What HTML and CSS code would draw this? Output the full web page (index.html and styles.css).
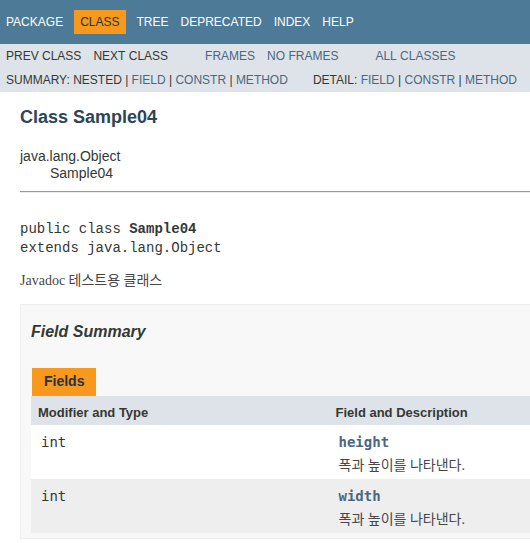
FILE: index.html
```html
<!DOCTYPE html>
<html lang="ko">
<head>
<meta charset="utf-8">
<title>Sample04</title>
<link rel="stylesheet" href="styles.css">
</head>
<body>
<div class="page">
  <div class="topNav">
    <ul class="navList">
      <li><a href="#">Package</a></li>
      <li class="navBarCell1Rev">Class</li>
      <li><a href="#">Tree</a></li>
      <li><a href="#">Deprecated</a></li>
      <li><a href="#">Index</a></li>
      <li><a href="#">Help</a></li>
    </ul>
  </div>
  <div class="subNav">
    <div class="subRow">
      <ul class="navList">
        <li>Prev&nbsp;Class</li>
        <li>Next&nbsp;Class</li>
      </ul>
      <ul class="navList">
        <li><a href="#">Frames</a></li>
        <li><a href="#">No&nbsp;Frames</a></li>
      </ul>
      <ul class="navList">
        <li><a href="#">All&nbsp;Classes</a></li>
      </ul>
    </div>
    <div class="subRow2">
      <ul class="subNavList">
        <li>Summary:&nbsp;</li>
        <li>Nested&nbsp;|&nbsp;</li>
        <li><a href="#">Field</a>&nbsp;|&nbsp;</li>
        <li><a href="#">Constr</a>&nbsp;|&nbsp;</li>
        <li><a href="#">Method</a></li>
      </ul>
      <ul class="subNavList">
        <li>Detail:&nbsp;</li>
        <li><a href="#">Field</a>&nbsp;|&nbsp;</li>
        <li><a href="#">Constr</a>&nbsp;|&nbsp;</li>
        <li><a href="#">Method</a></li>
      </ul>
    </div>
  </div>

  <div class="header">
    <h2 class="title">Class Sample04</h2>
  </div>

  <div class="contentContainer">
    <ul class="inheritance">
      <li>java.lang.Object</li>
      <li>
        <ul class="inheritance inner">
          <li>Sample04</li>
        </ul>
      </li>
    </ul>
    <div class="description">
      <hr class="rule">
      <pre class="signature">public class <span class="typeNameLabel">Sample04</span>
extends java.lang.Object</pre>
      <div class="block">Javadoc 테스트용 클래스</div>
    </div>

    <div class="summary">
      <h3 class="summaryTitle">Field Summary</h3>
      <table class="memberSummary">
        <caption><span class="tab">Fields</span></caption>
        <colgroup>
          <col class="colFirstCol">
          <col>
        </colgroup>
        <tr>
          <th class="colFirst">Modifier and Type</th>
          <th class="colLast">Field and Description</th>
        </tr>
        <tr class="altColor">
          <td class="colFirst"><code>int</code></td>
          <td class="colLast"><code><a class="memberNameLink" href="#">height</a></code>
            <div class="block">폭과 높이를 나타낸다.</div>
          </td>
        </tr>
        <tr class="rowColor">
          <td class="colFirst"><code>int</code></td>
          <td class="colLast"><code><a class="memberNameLink" href="#">width</a></code>
            <div class="block">폭과 높이를 나타낸다.</div>
          </td>
        </tr>
      </table>
    </div>
  </div>
</div>
</body>
</html>
```

FILE: styles.css
```css
html {
  overflow: hidden;
}

body {
  margin: 0;
  padding: 0;
  background: #ffffff;
  color: #353833;
  font-family: "Liberation Sans", Arial, "Noto Sans CJK KR", sans-serif;
  font-size: 14px;
}

.page {
  width: 760px;
}

a {
  color: #4A6782;
  text-decoration: none;
}

ul {
  list-style: none;
  margin: 0;
  padding: 0;
}

/* top navigation */
.topNav {
  background: #4D7A97;
  height: 33.6px;
  padding-top: 10px;
  font-size: 12px;
  line-height: 14px;
  display: flex;
  align-items: flex-start;
}

.navList {
  display: flex;
  align-items: flex-start;
  margin-right: 25px;
}

.navList li {
  padding: 5px 6px;
  text-transform: uppercase;
  white-space: nowrap;
}

.topNav a {
  color: #ffffff;
}

.topNav .navBarCell1Rev {
  background: #F8981D;
  color: #253441;
  margin: 0 5px;
}

/* sub navigation */
.subNav {
  background: #dee3e9;
  font-size: 12px;
  line-height: 14px;
}

.subRow {
  display: flex;
}

.subRow2 {
  display: flex;
  padding: 5.3px 0 5px 6px;
  text-transform: uppercase;
}

.subNavList {
  display: flex;
  margin-right: 25px;
}

.subNavList li {
  white-space: nowrap;
}

/* header */
.header {
  margin: 0 20px;
  padding-top: 5px;
}

.title {
  margin: 10px 0;
  color: #2c4557;
  font-size: 18px;
  line-height: 21px;
  font-weight: bold;
}

/* content */
.contentContainer {
  padding: 10px 20px;
}

.inheritance {
  font-size: 14px;
  line-height: 16px;
}

.inheritance.inner {
  margin-left: 15px;
  padding-left: 15px;
  padding-top: 1px;
}

.rule {
  height: 0;
  margin: 10px 0 0;
  border: 0;
  border-top: 1px solid #9a9a9a;
  border-bottom: 1px solid #eeeeee;
}

.signature {
  margin: 27px 0 14px;
  font-family: "Liberation Mono", "Courier New", monospace;
  font-size: 14px;
  line-height: 19.6px;
  color: #353833;
}

.typeNameLabel {
  font-weight: bold;
}

.block {
  font-family: "Liberation Serif", "Times New Roman", "Noto Sans CJK KR", serif;
  font-size: 14px;
  line-height: 16px;
  color: #474747;
}

/* field summary */
.summary {
  margin-top: 15px;
  background: #f8f8f8;
  border: 1px solid #ededed;
  padding: 0 20px 5px 10px;
}

.summaryTitle {
  margin: 18px 0 17px;
  font-size: 16px;
  line-height: 18px;
  font-style: italic;
  font-weight: bold;
  color: #353833;
}

.memberSummary {
  width: 100%;
  border-collapse: collapse;
  border-spacing: 0;
  table-layout: fixed;
}

.memberSummary caption {
  text-align: left;
  padding: 10px 0 0 1px;
  color: #253441;
  font-weight: bold;
  font-size: 14px;
}

.memberSummary .tab {
  display: inline-block;
  vertical-align: top;
  background: #F8981D;
  height: 16px;
  line-height: 16px;
  padding: 5px 12px 7px;
}

.colFirstCol {
  width: 297.5px;
}

.memberSummary th {
  background: #dee3e9;
  text-align: left;
  font-size: 13px;
  line-height: 18px;
  font-weight: bold;
  padding: 8px 3px 3px 7px;
  white-space: nowrap;
  vertical-align: top;
}

.memberSummary td {
  font-family: "Liberation Mono", "Courier New", monospace;
  font-size: 14px;
  line-height: 19.6px;
  padding: 8px 3px 3px 10px;
  vertical-align: top;
  text-align: left;
}

.memberSummary td .block {
  margin: 3px 10px 2px 0;
  line-height: 17.4px;
}

.memberNameLink {
  font-weight: bold;
}

.altColor {
  background: #ffffff;
}

.rowColor {
  background: #eeeeee;
}
```
